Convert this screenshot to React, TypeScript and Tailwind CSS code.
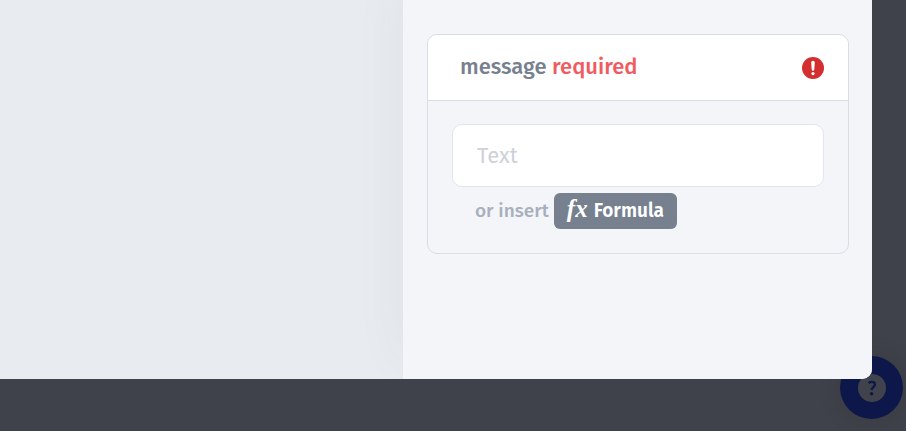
import React from "react";

function AlertIcon() {
  return (
    <svg role="img" aria-label="Field has an error" viewBox="0 0 22 22" className="size-[22px] shrink-0">
      <circle cx="11" cy="11" r="11" fill="#d32f2f" />
      <path d="M9.2 5.6a1.8 1.8 0 0 1 3.6 0l-.5 6.8a1.3 1.3 0 0 1-2.6 0z" fill="#fff" />
      <circle cx="11" cy="16.6" r="1.6" fill="#fff" />
    </svg>
  );
}

function HelpButton() {
  return (
    <button
      type="button"
      aria-label="Help"
      className="fixed right-[3px] bottom-3 flex size-[63px] items-center justify-center rounded-full bg-[#0d174a] shadow-[0_0_24px_rgba(0,0,0,0.12)]"
    >
      <svg viewBox="0 0 28 28" className="size-7" aria-hidden="true">
        <circle cx="14" cy="14" r="14" fill="#40434b" />
        <path
          d="M10.6 9.1c1-.8 2-1.2 3.3-1.2 1.9 0 3 1 3 2.6 0 2.5-3.3 2.7-3.3 5.6"
          fill="none"
          stroke="#0d174a"
          strokeWidth="2.4"
        />
        <circle cx="13.6" cy="19.7" r="1.7" fill="#0d174a" />
      </svg>
    </button>
  );
}

function MessageField() {
  return (
    <section className="overflow-hidden rounded-[10px] border border-[#d8dde6]">
      <div className="flex h-[66px] items-center justify-between border-b border-[#d8dde6] bg-white pr-6 pl-8">
        <label htmlFor="message" className="pb-0.5 text-[22px] leading-8 font-medium text-[#76808f]">
          message <span className="text-[#f05b5f]">required</span>
        </label>
        <AlertIcon />
      </div>
      <div className="px-6 pt-[23px] pb-6">
        <input
          id="message"
          type="text"
          required
          placeholder="Text"
          className="block h-[63px] w-full rounded-[10px] border border-[#e0e5ee] bg-white px-6 text-[22px] text-[#76808f] outline-none placeholder:text-[#cdd1d8]"
        />
        <div className="mt-1.5 flex items-center gap-[5px] pl-[23px] text-[19px] font-medium text-[#a8b0bc]">
          <span>or insert</span>
          <button
            type="button"
            className="flex h-9 items-center gap-1.5 rounded-md bg-[#76808f] px-[13px] font-semibold text-white"
          >
            <span
              aria-hidden="true"
              className="pb-1 font-['Liberation_Serif',serif] text-[25px] leading-6 font-bold italic"
            >
              fx
            </span>
            Formula
          </button>
        </div>
      </div>
    </section>
  );
}

export default function App() {
  return (
    <div className="min-h-screen bg-[#3f424a] pr-[34px] font-['Fira_Sans','Noto_Sans',sans-serif]">
      <HelpButton />
      <main className="relative flex overflow-hidden rounded-br-[10px] bg-[#e8ecf0]">
        <div className="flex-1" />
        <aside className="w-[469px] bg-[#f3f5f9] pt-[34px] pr-[23px] pb-[125px] pl-6 shadow-[0_-20px_50px_rgba(60,60,70,0.06)]">
          <MessageField />
        </aside>
      </main>
    </div>
  );
}
